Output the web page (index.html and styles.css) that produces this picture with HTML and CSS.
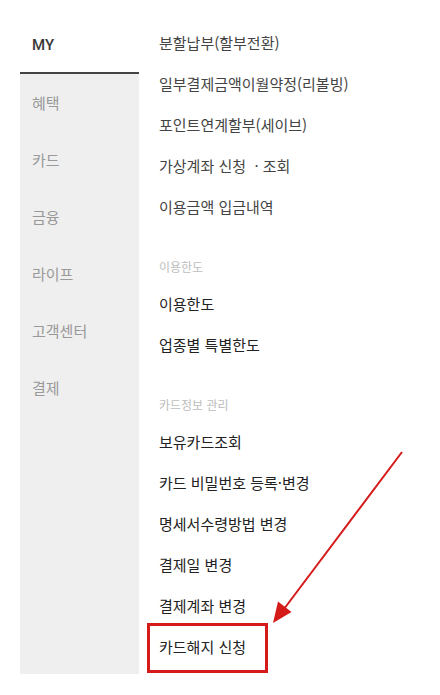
FILE: index.html
```html
<!DOCTYPE html>
<html lang="ko">
<head>
<meta charset="utf-8">
<title>MY 메뉴</title>
<link rel="stylesheet" href="styles.css">
</head>
<body>
<div class="page">
  <nav class="side">
    <div class="side-my">MY</div>
    <ul class="side-list">
      <li>혜택</li>
      <li>카드</li>
      <li>금융</li>
      <li>라이프</li>
      <li>고객센터</li>
      <li>결제</li>
    </ul>
  </nav>
  <main class="menu">
    <ul class="group group-first">
      <li class="item item-soft">분할납부(할부전환)</li>
      <li class="item item-soft">일부결제금액이월약정(리볼빙)</li>
      <li class="item item-soft">포인트연계할부(세이브)</li>
      <li class="item item-soft">가상계좌 신청&nbsp;&nbsp;·&nbsp;조회</li>
      <li class="item item-soft">이용금액 입금내역</li>
    </ul>
    <div class="group">
      <div class="group-title">이용한도</div>
      <ul>
        <li class="item">이용한도</li>
        <li class="item">업종별 특별한도</li>
      </ul>
    </div>
    <div class="group">
      <div class="group-title">카드정보 관리</div>
      <ul>
        <li class="item">보유카드조회</li>
        <li class="item">카드 비밀번호 등록·변경</li>
        <li class="item">명세서수령방법 변경</li>
        <li class="item">결제일 변경</li>
        <li class="item">결제계좌 변경</li>
        <li class="item">카드해지 신청</li>
      </ul>
    </div>
  </main>
  <svg class="annot" width="440" height="695" viewBox="0 0 440 695" aria-hidden="true">
    <rect x="148.5" y="624.5" width="118" height="47" fill="none" stroke="#d51a1a" stroke-width="3"/>
    <line x1="402" y1="452" x2="284" y2="609" stroke="#d51a1a" stroke-width="2"/>
    <polygon points="273,623 291.5,612 278,601.5" fill="#d51a1a"/>
  </svg>
</div>
</body>
</html>
```

FILE: styles.css
```css
* { box-sizing: border-box; }
html, body {
  margin: 0;
  padding: 0;
  background: #fff;
}
body {
  font-family: "Noto Sans CJK KR", "Noto Sans", sans-serif;
  width: 440px;
  height: 695px;
  overflow: hidden;
}
ul {
  list-style: none;
  margin: 0;
  padding: 0;
}
.page {
  position: relative;
  display: flex;
  padding-left: 20px;
  height: 695px;
}
.side {
  flex: none;
  width: 119px;
}
.side-my {
  height: 74px;
  padding: 35px 0 0 12px;
  line-height: 20px;
  font-family: "Roboto", "Noto Sans", sans-serif;
  font-size: 15px;
  font-weight: 500;
  color: #3a3a3a;
  border-bottom: 2px solid #444;
}
.side-list {
  background: #efefef;
  height: 600px;
}
.side-list li {
  height: 57px;
  line-height: 57px;
  padding-left: 12px;
  font-size: 15px;
  color: #999;
}
.menu {
  flex: 1;
  padding-left: 20px;
  padding-top: 22px;
}
.group {
  margin-top: 24px;
}
.group-first {
  margin-top: 0;
}
.group-title {
  height: 32px;
  line-height: 32px;
  font-size: 12px;
  color: #bdbdbd;
}
.item {
  height: 41px;
  line-height: 41px;
  font-size: 15px;
  color: #222;
  white-space: nowrap;
}
.item-soft {
  color: #444;
}
.annot {
  position: absolute;
  left: 0;
  top: 0;
  pointer-events: none;
}
```
